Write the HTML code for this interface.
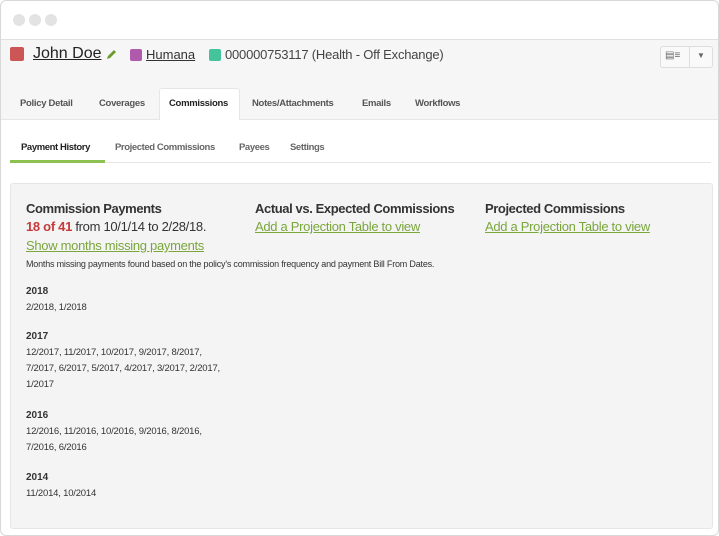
<!DOCTYPE html>
<html><head><style>
body{margin:0;width:719px;height:536px;background:#fff;font-family:"Liberation Sans",sans-serif;overflow:hidden;position:relative}
.win{position:absolute;left:0;top:0;width:717px;height:534px;border:1px solid #d8d8d8;border-radius:6px;overflow:hidden;background:#fff}
.dot{position:absolute;top:13px;width:12px;height:12px;border-radius:50%;background:#e3e3e3}
.hdr{position:absolute;left:0;top:38px;width:717px;height:79px;background:#f6f6f6;border-top:1px solid #e0e0e0;border-bottom:1px solid #e6e6e6}
.sq{position:absolute;width:14px;height:14px;border-radius:2px}
.t{position:absolute;white-space:nowrap;color:#333}
.tab{position:absolute;top:97px;font-size:9.5px;font-weight:bold;color:#555;letter-spacing:-0.3px}
.sub{position:absolute;top:141px;font-size:9.5px;font-weight:bold;color:#666;letter-spacing:-0.4px}
.panel{position:absolute;left:9px;top:182px;width:701px;height:344px;background:#f4f4f4;border:1px solid #e6e6e6;border-radius:3px}
.h{font-size:13px;font-weight:bold;color:#333;position:absolute;letter-spacing:-0.4px}
.lk{color:#7aa63c;text-decoration:underline;font-size:13px;position:absolute;letter-spacing:-0.3px;white-space:nowrap}
.s{font-size:9.5px;color:#333;position:absolute;white-space:nowrap;letter-spacing:-0.2px;line-height:16px}
.y{font-size:10px;font-weight:bold;color:#333;position:absolute}
</style></head><body>
<div class="win">
<div class="dot" style="left:12px"></div><div class="dot" style="left:28px"></div><div class="dot" style="left:44px"></div>
<div class="hdr"></div>
<div class="sq" style="left:9px;top:46px;background:#cc5656"></div>
<div class="t" style="left:32px;top:44px;font-size:16px;text-decoration:underline;color:#222">John Doe</div>
<svg style="position:absolute;left:104px;top:47px" width="13" height="13" viewBox="0 0 13 13"><path d="M2 11 L3 8 L9 2 L11 4 L5 10 Z" fill="#6a9a2c"/></svg>
<div class="sq" style="left:129px;top:48px;width:12px;height:12px;background:#b05aae"></div>
<div class="t" style="left:145px;top:46px;font-size:13px;text-decoration:underline;color:#333">Humana</div>
<div class="sq" style="left:208px;top:48px;width:12px;height:12px;background:#45c39a"></div>
<div class="t" style="left:224px;top:46px;font-size:13px;color:#444;letter-spacing:-0.2px">000000753117 (Health - Off Exchange)</div>
<div style="position:absolute;left:659px;top:45px;width:51px;height:20px;border:1px solid #ddd;border-radius:3px;background:#f9f9f9"></div>
<div style="position:absolute;left:688px;top:45px;width:1px;height:22px;background:#ddd"></div>
<div class="t" style="left:664px;top:49px;font-size:10px;color:#666">▤≡</div>
<div class="t" style="left:696px;top:50px;font-size:8px;color:#666">▼</div>
<div style="position:absolute;left:158px;top:87px;width:79px;height:31px;background:#fff;border:1px solid #e6e6e6;border-bottom:none;border-radius:3px 3px 0 0"></div>
<div class="tab" style="left:19px">Policy Detail</div>
<div class="tab" style="left:98px">Coverages</div>
<div class="tab" style="left:168px;color:#222">Commissions</div>
<div class="tab" style="left:251px">Notes/Attachments</div>
<div class="tab" style="left:361px">Emails</div>
<div class="tab" style="left:414px">Workflows</div>
<div class="sub" style="left:20px;color:#222">Payment History</div>
<div class="sub" style="left:114px">Projected Commissions</div>
<div class="sub" style="left:238px">Payees</div>
<div class="sub" style="left:289px">Settings</div>
<div style="position:absolute;left:9px;top:161px;width:701px;height:1px;background:#e6e6e6"></div>
<div style="position:absolute;left:9px;top:159px;width:95px;height:3px;background:#8cc152"></div>
<div class="panel"></div>
<div class="h" style="left:25px;top:200px">Commission Payments</div>
<div class="h" style="left:254px;top:200px">Actual vs. Expected Commissions</div>
<div class="h" style="left:484px;top:200px">Projected Commissions</div>
<div class="t" style="left:25px;top:218px;font-size:13px;letter-spacing:-0.3px"><b style="color:#c73a3a">18 of 41</b> from 10/1/14 to 2/28/18.</div>
<div class="lk" style="left:254px;top:218px">Add a Projection Table to view</div>
<div class="lk" style="left:484px;top:218px">Add a Projection Table to view</div>
<div class="lk" style="left:25px;top:237px">Show months missing payments</div>
<div class="s" style="left:25px;top:255px;font-size:9px">Months missing payments found based on the policy's commission frequency and payment Bill From Dates.</div>
<div class="y" style="left:25px;top:285px">2018</div>
<div class="s" style="left:25px;top:299px">2/2018, 1/2018</div>
<div class="y" style="left:25px;top:330px">2017</div>
<div class="s" style="left:25px;top:344px">12/2017, 11/2017, 10/2017, 9/2017, 8/2017,<br>7/2017, 6/2017, 5/2017, 4/2017, 3/2017, 2/2017,<br>1/2017</div>
<div class="y" style="left:25px;top:409px">2016</div>
<div class="s" style="left:25px;top:423px">12/2016, 11/2016, 10/2016, 9/2016, 8/2016,<br>7/2016, 6/2016</div>
<div class="y" style="left:25px;top:471px">2014</div>
<div class="s" style="left:25px;top:485px">11/2014, 10/2014</div>
</div>
</body></html>
